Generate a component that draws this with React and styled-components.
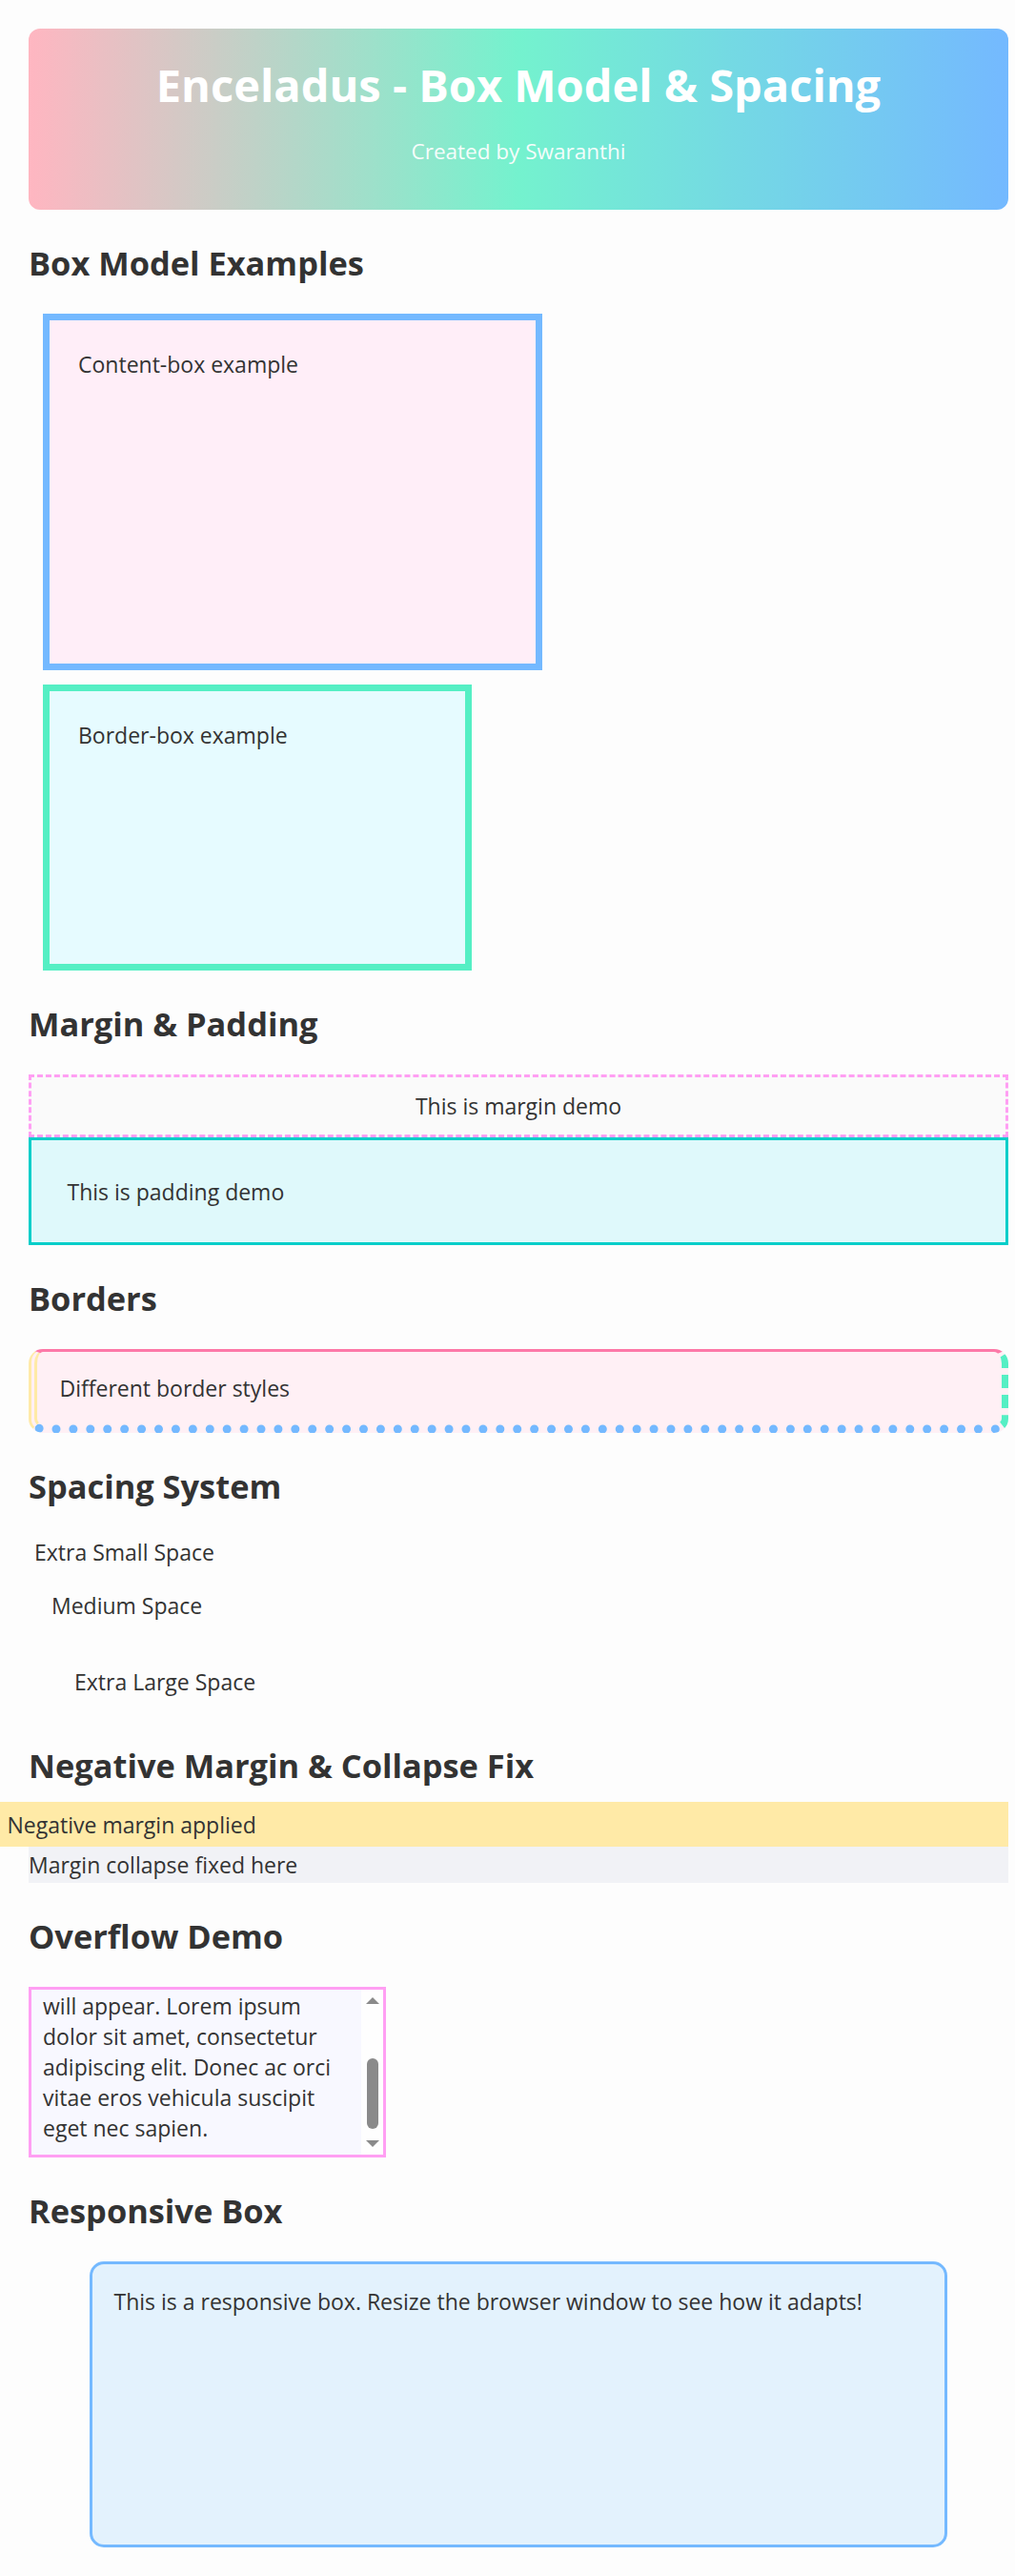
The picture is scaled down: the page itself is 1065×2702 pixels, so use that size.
import React from "react";
import styled, { createGlobalStyle } from "styled-components";

const Global = createGlobalStyle`
  *, *::before, *::after { box-sizing: border-box; }
  html, body { margin: 0; padding: 0; }
  body {
    background: #fdfdfd;
    font-family: "Open Sans", "Noto Sans", sans-serif;
    font-size: 23px;
    line-height: 32px;
    color: #333333;
  }
`;

const Page = styled.div`
  padding: 30px 7px 29px 30px;
`;

const Header = styled.header`
  border-radius: 12px;
  background: linear-gradient(90deg, #ffb6c1 0%, #74f2ce 50%, #74b9ff 100%);
  padding: 27px 20px 45px;
  text-align: center;
  color: #ffffff;
`;

const Title = styled.h1`
  margin: 0;
  font-size: 47px;
  line-height: 64px;
  font-weight: 700;
`;

const Subtitle = styled.p`
  margin: 22px 0 0;
  font-size: 22.5px;
  line-height: 32px;
  opacity: 0.92;
`;

const Section = styled.section``;

const SectionTitle = styled.h2`
  margin: 32px 0 29px;
  font-size: 34.4px;
  line-height: 48px;
  font-weight: 700;
  color: #333333;
`;

const ModelBox = styled.div`
  box-sizing: ${(p) => p.$sizing};
  width: 450px;
  height: 300px;
  margin: 15px;
  padding: 30px;
  border: 7px solid ${(p) => p.$border};
  background: ${(p) => p.$bg};
`;

const MarginDemo = styled.div`
  padding: 14px;
  border: 3px dashed #ff9ff3;
  background: #fafafa;
  text-align: center;
`;

const PaddingDemo = styled.div`
  padding: 37.5px;
  border: 3px solid #00cec9;
  background: #dff9fb;
`;

const BorderDemo = styled.div`
  padding: 22px 22.5px 22px 23.5px;
  border-top: 3px solid #fd79a8;
  border-right: 7px dashed #55efc4;
  border-bottom: 9px dotted #74b9ff;
  border-left: 9px double #ffeaa7;
  border-radius: 15px;
  background: #fff0f5;
`;

const SpaceItem = styled.div`
  margin: ${(p) => p.$space}px;
`;

const NegativeBox = styled.div`
  margin: -15px 0 0 -30px;
  padding: 7.5px;
  background: #ffeaa7;
`;

const CollapseBox = styled.div`
  padding: 3px 0;
  background: #f1f2f6;
`;

const OverflowBox = styled.div`
  display: flex;
  width: 375px;
  height: 179px;
  border: 3px solid #ff9ff3;
  background: #f8f8ff;
`;

const OverflowViewport = styled.div`
  flex: 1;
  min-width: 0;
  display: flex;
  flex-direction: column;
  justify-content: flex-end;
  padding: 12px;
  overflow: hidden;
`;

const Scrollbar = styled.div`
  display: flex;
  flex-direction: column;
  align-items: center;
  width: 23px;
  flex: none;
  background: #fefefe;
`;

const ScrollButton = styled.div`
  display: flex;
  align-items: center;
  justify-content: center;
  width: 23px;
  height: 23px;
  flex: none;
`;

const ScrollArrow = styled.span`
  width: 0;
  height: 0;
  border-left: 7px solid transparent;
  border-right: 7px solid transparent;
  ${(p) =>
    p.$dir === "up"
      ? "border-bottom: 7px solid #8a8a8a;"
      : "border-top: 7px solid #8a8a8a;"}
`;

const ScrollTrack = styled.div`
  flex: 1;
  display: flex;
  flex-direction: column;
  justify-content: flex-end;
  align-items: center;
  padding-bottom: 4px;
`;

const ScrollThumb = styled.div`
  width: 12px;
  height: 74px;
  border-radius: 6px;
  background: #8a8a8a;
`;

const OverflowText = styled.p`
  margin: 0;
`;

const ResponsiveBox = styled.div`
  max-width: 900px;
  height: 300px;
  margin: 0 auto;
  padding: 22.5px;
  border: 3px solid #74b9ff;
  border-radius: 15px;
  background: #e3f2fd;
`;

export default function App() {
  return (
    <>
      <Global />
      <Page>
        <Header>
          <Title>Enceladus - Box Model &amp; Spacing</Title>
          <Subtitle>Created by Swaranthi</Subtitle>
        </Header>

        <Section>
          <SectionTitle>Box Model Examples</SectionTitle>
          <ModelBox $sizing="content-box" $border="#74b9ff" $bg="#ffeef8">
            Content-box example
          </ModelBox>
          <ModelBox $sizing="border-box" $border="#55efc4" $bg="#e6fbff">
            Border-box example
          </ModelBox>
        </Section>

        <Section>
          <SectionTitle>Margin &amp; Padding</SectionTitle>
          <MarginDemo>This is margin demo</MarginDemo>
          <PaddingDemo>This is padding demo</PaddingDemo>
        </Section>

        <Section>
          <SectionTitle>Borders</SectionTitle>
          <BorderDemo>Different border styles</BorderDemo>
        </Section>

        <Section>
          <SectionTitle>Spacing System</SectionTitle>
          <SpaceItem $space={6}>Extra Small Space</SpaceItem>
          <SpaceItem $space={24}>Medium Space</SpaceItem>
          <SpaceItem $space={48}>Extra Large Space</SpaceItem>
        </Section>

        <Section>
          <SectionTitle>Negative Margin &amp; Collapse Fix</SectionTitle>
          <NegativeBox>Negative margin applied</NegativeBox>
          <CollapseBox>Margin collapse fixed here</CollapseBox>
        </Section>

        <Section>
          <SectionTitle>Overflow Demo</SectionTitle>
          <OverflowBox>
            <OverflowViewport>
              <OverflowText>
                will appear. Lorem ipsum
                <br />
                dolor sit amet, consectetur
                <br />
                adipiscing elit. Donec ac orci
                <br />
                vitae eros vehicula suscipit
                <br />
                eget nec sapien.
              </OverflowText>
            </OverflowViewport>
            <Scrollbar aria-hidden="true">
              <ScrollButton>
                <ScrollArrow $dir="up" />
              </ScrollButton>
              <ScrollTrack>
                <ScrollThumb />
              </ScrollTrack>
              <ScrollButton>
                <ScrollArrow $dir="down" />
              </ScrollButton>
            </Scrollbar>
          </OverflowBox>
        </Section>

        <Section>
          <SectionTitle>Responsive Box</SectionTitle>
          <ResponsiveBox>
            This is a responsive box. Resize the browser window to see how it adapts!
          </ResponsiveBox>
        </Section>
      </Page>
    </>
  );
}
